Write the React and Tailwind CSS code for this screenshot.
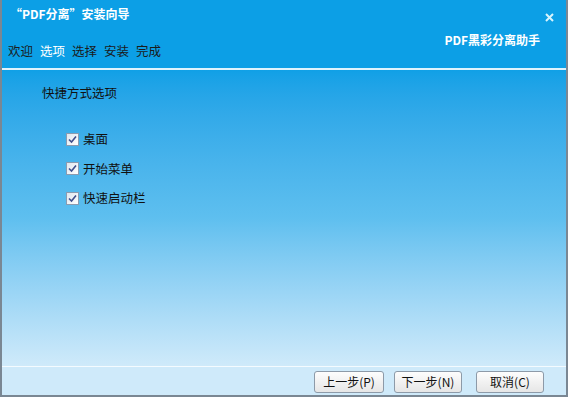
export default function App() {
  const font = { fontFamily: '"Noto Sans CJK SC", "Liberation Sans", sans-serif' };
  const Check = () => (
    <span className="w-[13px] h-[13px] border border-[#8a9bb0] bg-gradient-to-br from-[#dfe6ee] to-[#ffffff] flex items-center justify-center">
      <svg width="9" height="9" viewBox="0 0 9 9">
        <path d="M1 4.5 L3.5 7 L8 1.5" stroke="#3f4f8c" strokeWidth="1.6" fill="none" />
      </svg>
    </span>
  );
  const Btn = ({ children, w, ml }) => (
    <button className={`h-[22px] ${w} ${ml} rounded-[3px] border border-[#8d9aa8] bg-gradient-to-b from-[#fdfdfd] to-[#e6e6e6] text-[12px] text-[#111] leading-none flex items-center justify-center`}>
      {children}
    </button>
  );
  return (
    <div style={font} className="w-[568px] h-[397px] border-x-2 border-b-2 border-[#7a8793] flex flex-col overflow-hidden bg-[#cfeafa]">
      <div className="h-[68px] bg-[#0c9fe6] relative flex flex-col px-[6px]">
        <div className="text-white font-bold text-[12px] pt-[4px] pl-[2px] leading-[20px]">“PDF分离”安装向导</div>
        <div className="flex gap-[7px] text-[12.5px] mt-[18px] leading-[18px]">
          <span className="text-[#1b1b1b]">欢迎</span>
          <span className="text-white">选项</span>
          <span className="text-[#1b1b1b]">选择</span>
          <span className="text-[#1b1b1b]">安装</span>
          <span className="text-[#1b1b1b]">完成</span>
        </div>
        <div className="absolute right-[6px] top-[8px] text-[#d8f0fb]">
          <svg width="20" height="20" viewBox="0 0 20 20">
            <path d="M6 6 L13 13 M13 6 L6 13" stroke="#d8f4fc" strokeWidth="2" />
          </svg>
        </div>
        <div className="absolute right-[26px] top-[30px] text-white font-bold text-[12px] leading-[20px]">PDF黑彩分离助手</div>
      </div>
      <div className="h-[2px] bg-[#dff3fd]" />
      <div className="flex-1 bg-gradient-to-b from-[#10a0e6] via-[#5ebfef] to-[#cfeafa] flex flex-col">
        <div className="text-[12.5px] text-[#111] pl-[40px] pt-[14px] leading-[18px]">快捷方式选项</div>
        <div className="flex flex-col gap-[11.5px] pl-[64px] pt-[28px]">
          {['桌面', '开始菜单', '快速启动栏'].map((t) => (
            <div key={t} className="flex items-center gap-[4px] text-[12.5px] text-[#111] leading-[18px]">
              <Check />
              <span>{t}</span>
            </div>
          ))}
        </div>
      </div>
      <div className="h-[1px] bg-[#f4fbff]" />
      <div className="h-[28px] bg-[#cfeafa] flex items-start justify-end pr-[22px] pt-[4px]">
        <Btn w="w-[70px]" ml="">上一步(P)</Btn>
        <Btn w="w-[68px]" ml="ml-[10px]">下一步(N)</Btn>
        <Btn w="w-[68px]" ml="ml-[14px]">取消(C)</Btn>
      </div>
    </div>
  );
}
